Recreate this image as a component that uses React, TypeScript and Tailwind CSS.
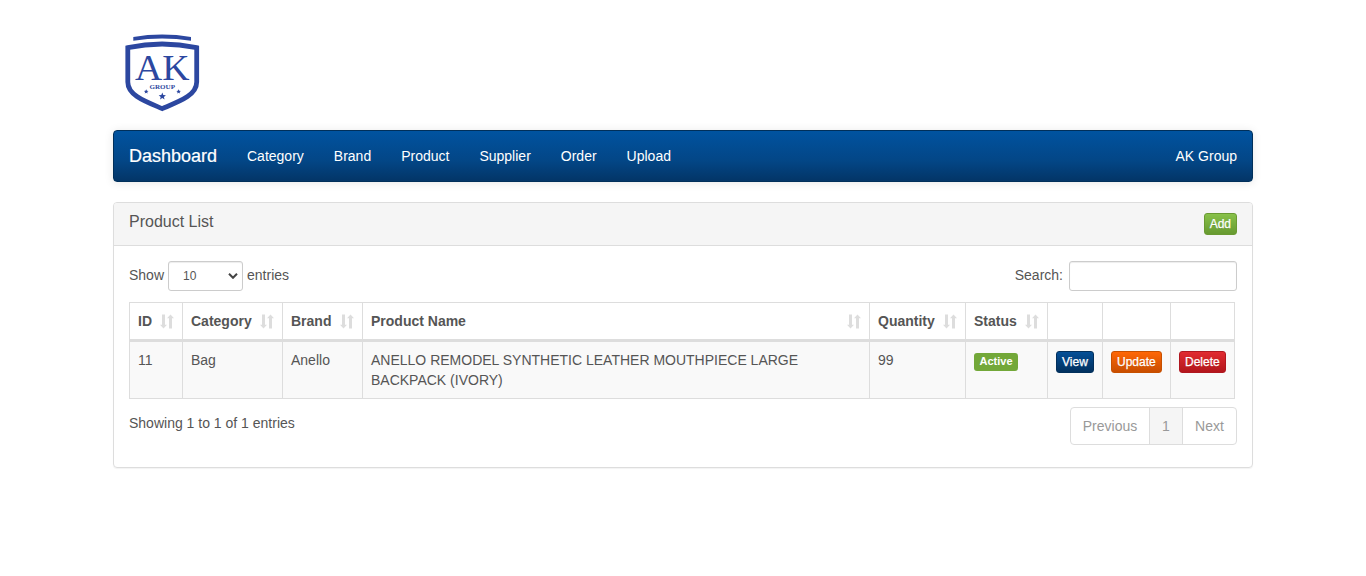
import React from "react";

const menu = ["Category", "Brand", "Product", "Supplier", "Order", "Upload"];
const columns = ["ID", "Category", "Brand", "Product Name", "Quantity", "Status", "", "", ""];

function Logo() {
  return (
    <svg className="block h-[80px] w-[76px]" viewBox="124 33 76 80" fill="#2c47a0">
      <path d="M133.3 37Q162 32.2 191 37V40.8Q162 36.2 133.3 40.8Z" />
      <path
        d="M127.8 47.6Q162 40.4 196.7 47.6V82C196.7 95.5 179 101.5 162.2 108.6C145.500 101.500 127.800 95.500 127.800 82Z"
        fill="none"
        stroke="#2c47a0"
        strokeWidth="4.8"
      />
      <text x="135" y="79.8" fontSize="36.500" fontFamily="Liberation Serif, serif" textLength="54.500" lengthAdjust="spacingAndGlyphs">
        AK
      </text>
      <text x="149.500" y="88.700" fontSize="6.400" fontWeight="700" fontFamily="Liberation Serif, serif" textLength="25.500" lengthAdjust="spacingAndGlyphs">
        GROUP
      </text>
      <path d="M162.3 92.6l1 2.5 2.600.1-2 1.700.7 2.600-2.300-1.400-2.300 1.400.7-2.600-2-1.700 2.600-.1z" />
      <path d="M146.200 89.300l.7 1.500 1.600.1-1.300 1 .5 1.700-1.500-.9-1.500.9.5-1.700-1.300-1 1.600-.1z" />
      <path d="M178.600 89.300l.7 1.500 1.600.1-1.300 1 .5 1.700-1.500-.9-1.500.9.5-1.700-1.300-1 1.600-.1z" />
    </svg>
  );
}

function SortIcon() {
  return (
    <svg className="h-[15px] w-[14px]" viewBox="0 0 14 15" fill="#dddddd">
      <path d="M2 .5h3v10.300h2L3.500 14.500 0 10.800h2z" />
      <path d="M9 14.500h3V4.200h2L10.500 .5 7 4.200h2z" />
    </svg>
  );
}

function SmallButton({ label, className }: { label: string; className: string }) {
  return (
    <button
      className={
        "block h-[22px] rounded-[3px] border px-[5px] text-[12px] leading-[18px] text-white [text-shadow:0_1px_0_rgba(0,0,0,0.1)] [-webkit-text-stroke:0.25px_white] " +
        className
      }
    >
      {label}
    </button>
  );
}

export default function App() {
  return (
    <div className="min-h-[576px] bg-white font-['Liberation_Sans',Arial,sans-serif] text-[14px] leading-5 text-[#555555]">
      <div className="mx-auto w-[1140px]">
        <header className="h-[130px] pt-[33px] pl-[11px]">
          <Logo />
        </header>

        <nav className="flex h-[52px] items-center rounded-[4px] border border-[#002f5a] bg-linear-to-b from-[#0053a0] via-[#034686] via-60% to-[#033567] px-[15px] text-white shadow-[0_1px_10px_rgba(0,0,0,0.1)]">
          <a className="w-[88px] text-[18px] [-webkit-text-stroke:0.2px_white]">Dashboard</a>
          <div className="ml-[30px] flex gap-[30px]">
            {menu.map((m) => (
              <a key={m}>{m}</a>
            ))}
          </div>
          <a className="ml-auto">AK Group</a>
        </nav>

        <section className="mt-5 h-[266px] rounded-[4px] border border-[#dddddd] shadow-[0_1px_1px_rgba(0,0,0,0.05)]">
          <div className="flex h-[43px] items-start justify-between rounded-t-[3px] border-b border-[#dddddd] bg-[#f5f5f5] px-[15px] pt-[10px]">
            <h3 className="text-[16px] leading-[17px]">Product List</h3>
            <SmallButton label="Add" className="border-[#6a9a32] bg-linear-to-b from-[#88c149] to-[#679a30]" />
          </div>

          <div className="px-[15px] pt-[15px]">
            <div className="flex h-[30px] items-center justify-between">
              <label className="flex items-center">
                <span className="pb-[2px]">Show</span>
                <span className="mx-1 flex h-[30px] w-[75px] items-center justify-between rounded-[3px] border border-[#cccccc] pr-[4px] pl-[14px] text-[12px] shadow-[inset_0_1px_1px_rgba(0,0,0,0.075)]">
                  10
                  <svg className="h-[6px] w-[10px]" viewBox="0 0 10 6" fill="none" stroke="#444444" strokeWidth="2">
                    <path d="M1 .8 5 4.8 9 .8" />
                  </svg>
                </span>
                <span className="pb-[2px]">entries</span>
              </label>
              <label className="flex items-center">
                <span className="pb-[2px]">Search:</span>
                <input className="ml-[6px] h-[30px] w-[168px] rounded-[3px] border border-[#cccccc] bg-white shadow-[inset_0_1px_1px_rgba(0,0,0,0.075)]" />
              </label>
            </div>

            <div className="mt-[11px] grid w-[1106px] grid-cols-[53px_100px_80px_507px_96px_82px_55px_68px_64px] border border-r-0 border-[#dddddd] *:border-r *:border-[#dddddd]">
              {columns.map((c, i) => (
                <div key={i} className="flex h-[39px] items-start justify-between border-b-3 pt-2 pr-2 pl-2 font-bold">
                  {c}
                  {c && (
                    <span className="pt-[3px]">
                      <SortIcon />
                    </span>
                  )}
                </div>
              ))}
              <div className="h-[56px] bg-[#f9f9f9] p-2">11</div>
              <div className="bg-[#f9f9f9] p-2">Bag</div>
              <div className="bg-[#f9f9f9] p-2">Anello</div>
              <div className="bg-[#f9f9f9] p-2">ANELLO REMODEL SYNTHETIC LEATHER MOUTHPIECE LARGE BACKPACK (IVORY)</div>
              <div className="bg-[#f9f9f9] p-2">99</div>
              <div className="bg-[#f9f9f9] px-2 pt-[11px]">
                <span className="block h-[18px] w-[44px] rounded-[3px] bg-[#73a839] text-center text-[11px] leading-[17px] font-bold text-white">
                  Active
                </span>
              </div>
              <div className="bg-[#f9f9f9] px-2 pt-[9px]">
                <SmallButton label="View" className="border-[#02305c] bg-linear-to-b from-[#044f97] to-[#02315f]" />
              </div>
              <div className="bg-[#f9f9f9] px-2 pt-[9px]">
                <SmallButton label="Update" className="border-[#c75000] bg-linear-to-b from-[#ff6707] to-[#c94e00]" />
              </div>
              <div className="bg-[#f9f9f9] px-2 pt-[9px]">
                <SmallButton label="Delete" className="border-[#b01820] bg-linear-to-b from-[#e12b31] to-[#b3161c]" />
              </div>
            </div>

            <div className="flex justify-between pt-2">
              <span className="pt-[6px]">Showing 1 to 1 of 1 entries</span>
              <div className="flex h-[38px] divide-x divide-[#dddddd] rounded-[4px] border border-[#dddddd] text-center leading-9 text-[#999999]">
                <span className="w-[79px]">Previous</span>
                <span className="w-[33px] bg-[#f5f5f5]">1</span>
                <span className="w-[53px]">Next</span>
              </div>
            </div>
          </div>
        </section>
      </div>
    </div>
  );
}
